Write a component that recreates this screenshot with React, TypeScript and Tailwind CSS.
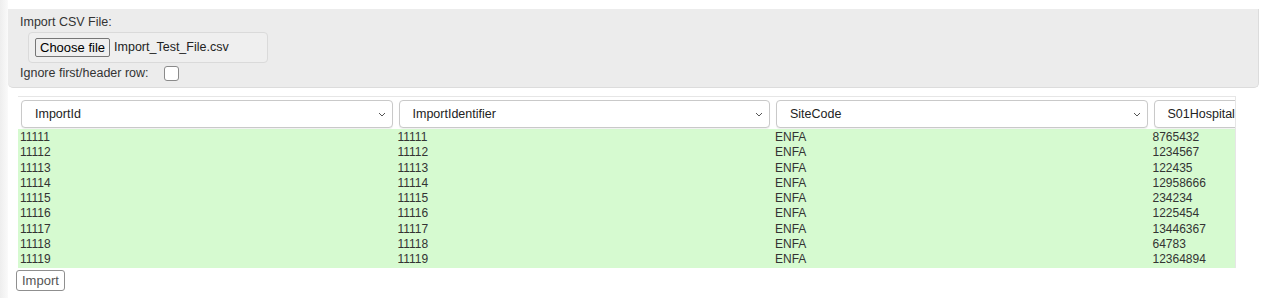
import { useState } from "react";

const columns = ["ImportId", "ImportIdentifier", "SiteCode", "S01HospitalNumber"];

const rows = [
  ["11111", "11111", "ENFA", "8765432"],
  ["11112", "11112", "ENFA", "1234567"],
  ["11113", "11113", "ENFA", "122435"],
  ["11114", "11114", "ENFA", "12958666"],
  ["11115", "11115", "ENFA", "234234"],
  ["11116", "11116", "ENFA", "1225454"],
  ["11117", "11117", "ENFA", "13446367"],
  ["11118", "11118", "ENFA", "64783"],
  ["11119", "11119", "ENFA", "12364894"],
];

const Chevron = () => (
  <svg width="8" height="5" viewBox="0 0 8 5" className="shrink-0">
    <path d="M1 1l3 3 3-3" fill="none" stroke="#555" strokeWidth="1" />
  </svg>
);

const App = () => {
  const [ignoreHeader, setIgnoreHeader] = useState(false);

  return (
    <div
      className="flex h-[307px] w-[1268px] bg-white text-[#333] overflow-hidden"
      style={{ fontFamily: '"Liberation Sans", Arial, sans-serif' }}
    >
      {/* left shadow strip */}
      <div className="h-[298px] w-[8px] shrink-0 bg-gradient-to-r from-[#eeeeee] to-[#fafafa]" />

      <div className="flex flex-col pt-[9px]">
        {/* import panel */}
        <div className="flex h-[79px] w-[1251px] flex-col rounded-b-[5px] border-r border-b border-[#dcdcdc] bg-[#ececec] pl-[12px] pt-[6px]">
          <label className="text-[12.5px] leading-[14px]">Import CSV File:</label>
          <div className="ml-[8px] mt-[3px] flex h-[31px] w-[240px] items-center rounded-[4px] border border-[#dadada] bg-[#efefef] pl-[6px]">
            <button className="h-[19px] rounded-[2px] border border-[#767676] bg-[#efefef] px-[4px] text-[13px] leading-[17px] text-black">
              Choose file
            </button>
            <span className="ml-[4px] text-[12.5px] text-[#222]">Import_Test_File.csv</span>
          </div>
          <div className="mt-[2px] flex items-center">
            <span className="text-[12.5px] leading-[16px]">Ignore first/header row:</span>
            <input
              type="checkbox"
              checked={ignoreHeader}
              onChange={(e) => setIgnoreHeader(e.target.checked)}
              className="ml-[15px] h-[15px] w-[15px] appearance-none rounded-[3px] border border-[#8a8a8a] bg-white"
            />
          </div>
        </div>

        {/* preview table */}
        <div className="ml-[10px] mt-[8px] w-[1218px] overflow-hidden border-t border-r border-[#e6e6e6]">
          <div className="flex w-max pt-[3px] pb-[1px]">
            {columns.map((col) => (
              <div key={col} className="w-[377.5px] shrink-0 px-[3px]">
                <div className="flex h-[28px] items-center justify-between rounded-[4px] border border-[#c9c9c9] bg-white pl-[13px] pr-[6px] shadow-[0_1px_1px_rgba(0,0,0,0.06)]">
                  <span className="whitespace-nowrap text-[12.5px] text-[#222]">{col}</span>
                  <Chevron />
                </div>
              </div>
            ))}
          </div>
          <div className="w-max bg-[#d6fad0] pt-[1px]">
            {rows.map((row) => (
              <div key={row[0]} className="flex">
                {row.map((cell, i) => (
                  <div
                    key={i}
                    className="w-[377.5px] shrink-0 pl-[2px] text-[12px] leading-[15.3px] text-[#333]"
                  >
                    {cell}
                  </div>
                ))}
              </div>
            ))}
          </div>
        </div>

        <div className="ml-[8px] mt-[2px] flex">
          <button className="h-[21px] rounded-[3px] border border-[#8f8f8f] bg-white px-[5px] text-[13px] leading-[19px] text-[#555]">
            Import
          </button>
        </div>
      </div>
    </div>
  );
};

export default App;
